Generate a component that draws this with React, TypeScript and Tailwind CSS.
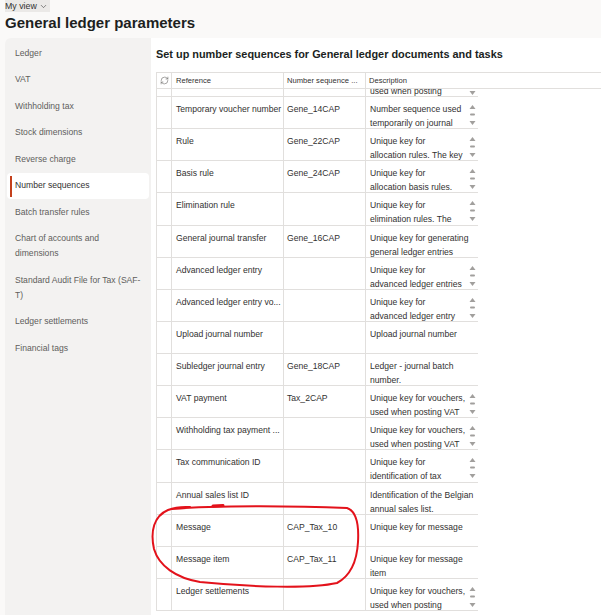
import { ChevronDown, RefreshCw } from "lucide-react";

type Row = { ref: string; seq?: string; desc: string[]; scroll?: boolean };

const rows: Row[] = [
  { ref: "Temporary voucher number", seq: "Gene_14CAP", desc: ["Number sequence used", "temporarily on journal"], scroll: true },
  { ref: "Rule", seq: "Gene_22CAP", desc: ["Unique key for", "allocation rules. The key"], scroll: true },
  { ref: "Basis rule", seq: "Gene_24CAP", desc: ["Unique key for", "allocation basis rules."], scroll: true },
  { ref: "Elimination rule", desc: ["Unique key for", "elimination rules. The"], scroll: true },
  { ref: "General journal transfer", seq: "Gene_16CAP", desc: ["Unique key for generating", "general ledger entries"] },
  { ref: "Advanced ledger entry", desc: ["Unique key for", "advanced ledger entries"], scroll: true },
  { ref: "Advanced ledger entry vo...", desc: ["Unique key for", "advanced ledger entry"], scroll: true },
  { ref: "Upload journal number", desc: ["Upload journal number"] },
  { ref: "Subledger journal entry", seq: "Gene_18CAP", desc: ["Ledger - journal batch", "number."] },
  { ref: "VAT payment", seq: "Tax_2CAP", desc: ["Unique key for vouchers,", "used when posting VAT"], scroll: true },
  { ref: "Withholding tax payment ...", desc: ["Unique key for vouchers,", "used when posting VAT"], scroll: true },
  { ref: "Tax communication ID", desc: ["Unique key for", "identification of tax"], scroll: true },
  { ref: "Annual sales list ID", desc: ["Identification of the Belgian", "annual sales list."] },
  { ref: "Message", seq: "CAP_Tax_10", desc: ["Unique key for message"] },
  { ref: "Message item", seq: "CAP_Tax_11", desc: ["Unique key for message", "item"] },
  { ref: "Ledger settlements", desc: ["Unique key for vouchers,", "used when posting"], scroll: true },
];

const navItems: { label: string[]; active?: boolean }[] = [
  { label: ["Ledger"] },
  { label: ["VAT"] },
  { label: ["Withholding tax"] },
  { label: ["Stock dimensions"] },
  { label: ["Reverse charge"] },
  { label: ["Number sequences"], active: true },
  { label: ["Batch transfer rules"] },
  { label: ["Chart of accounts and", "dimensions"] },
  { label: ["Standard Audit File for Tax (SAF-", "T)"] },
  { label: ["Ledger settlements"] },
  { label: ["Financial tags"] },
];

function ScrollArrows() {
  return (
    <svg width="7" height="22" viewBox="0 0 7 22" className="mt-[2px] shrink-0">
      <polygon points="0.5,5 3.5,1 6.5,5" fill="#a19f9d" />
      <rect x="1" y="9.5" width="5" height="2" rx="1" fill="#a19f9d" />
      <polygon points="0.5,17 3.5,21 6.5,17" fill="#a19f9d" />
    </svg>
  );
}

export default function App() {
  return (
    <div className="relative w-[601px] h-[615px] overflow-hidden bg-[#faf9f8] text-[#323130] font-['Liberation_Sans',Arial,sans-serif]">
      <div className="px-[5px]">
        <div className="flex">
          <div className="flex items-center gap-[2px] h-[12px] bg-[#ebe9e7] pr-[2px] text-[8.8px] leading-[12px] text-[#323130]">
            My view
            <ChevronDown size={9} strokeWidth={1.5} />
          </div>
        </div>
        <h1 className="text-[15px] leading-[21px] font-bold text-[#201f1e] whitespace-nowrap">General ledger parameters</h1>
      </div>

      <div className="flex mt-[5px] h-full">
        {/* left nav */}
        <nav className="w-[146px] ml-[5px] shrink-0 bg-[#f3f2f1] rounded-tl-[6px] pt-[2px] px-[2px]">
          {navItems.map((item) => (
            <div
              key={item.label.join(" ")}
              className={
                "relative rounded-[4px] pl-[8px] py-[5.75px] text-[8.6px] leading-[15px] " +
                (item.active ? "bg-white text-[#323130]" : "text-[#605e5c]")
              }
            >
              {item.active && <span className="absolute left-[3px] top-[3px] bottom-[2px] w-[2px] bg-[#c4401c]" />}
              {item.label.map((l) => (
                <div key={l} className="whitespace-nowrap">{l}</div>
              ))}
            </div>
          ))}
        </nav>

        {/* main */}
        <main className="flex-1 bg-white pl-[5px] pt-[8px]">
          <h2 className="text-[10.9px] leading-[16px] font-bold text-[#201f1e] mb-[10px] whitespace-nowrap">
            Set up number sequences for General ledger documents and tasks
          </h2>

          <div className="flex h-[17px] border-y border-[#e1dfdd] text-[7.6px] text-[#323130]">
            <div className="w-[16px] shrink-0 border-x border-[#e1dfdd] flex items-center justify-center">
              <RefreshCw size={9} strokeWidth={1.5} className="text-[#605e5c]" />
            </div>
            <div className="w-[112px] shrink-0 border-r border-[#e1dfdd] pl-[4px] flex items-center">Reference</div>
            <div className="w-[82px] shrink-0 border-r border-[#e1dfdd] pl-[3px] flex items-center whitespace-nowrap">Number sequence ...</div>
            <div className="w-[112px] shrink-0 pl-[3px] flex items-center">Description</div>
            <div className="flex-1" />
          </div>

          <div className="w-[322px] text-[8.6px] leading-[14px]">
            {/* partially scrolled row */}
            <div className="flex h-[8px] border-b border-l border-[#e1dfdd] overflow-hidden">
              <div className="w-[15px] shrink-0 border-r border-[#e1dfdd]" />
              <div className="w-[112px] shrink-0 border-r border-[#e1dfdd]" />
              <div className="w-[82px] shrink-0 border-r border-[#e1dfdd]" />
              <div className="flex-1 flex pl-[4px]">
                <div className="flex-1 -mt-[5px] whitespace-nowrap">used when posting</div>
                <svg width="7" height="8" viewBox="0 0 7 8" className="mr-[2px] shrink-0">
                  <polygon points="0.5,2 3.5,6 6.5,2" fill="#a19f9d" />
                </svg>
              </div>
            </div>

            {rows.map((r) => (
              <div key={r.ref} className="flex h-[32.13px] border-b border-l border-[#e1dfdd]">
                <div className="w-[15px] shrink-0 border-r border-[#e1dfdd]" />
                <div className="w-[112px] shrink-0 border-r border-[#e1dfdd] pl-[4px] pt-[5px] whitespace-nowrap">{r.ref}</div>
                <div className="w-[82px] shrink-0 border-r border-[#e1dfdd] pl-[3px] pt-[5px] whitespace-nowrap">{r.seq}</div>
                <div className="flex-1 flex pl-[4px] pt-[5px]">
                  <div className="flex-1 whitespace-nowrap">
                    {r.desc.map((d) => (
                      <div key={d}>{d}</div>
                    ))}
                  </div>
                  {r.scroll && (
                    <div className="mr-[2px]">
                      <ScrollArrows />
                    </div>
                  )}
                </div>
              </div>
            ))}
          </div>
        </main>
      </div>

      {/* hand-drawn red annotation */}
      <svg className="absolute left-0 top-0 pointer-events-none" width="601" height="615" viewBox="0 0 601 615" fill="none">
        <path
          d="M172 509 C 220 505, 300 506, 347 508 C 356 511, 359 525, 358 542 C 357 560, 352 575, 337 583 C 310 589, 250 587, 200 582 C 176 578, 159 566, 154 549 C 150 531, 154 516, 168 510 C 178 506, 186 507, 190 507"
          stroke="#e3121b"
          strokeWidth="2"
          strokeLinecap="round"
        />
        <path d="M213 506 L 223 505.5" stroke="#e3121b" strokeWidth="3" strokeLinecap="round" />
      </svg>
    </div>
  );
}
